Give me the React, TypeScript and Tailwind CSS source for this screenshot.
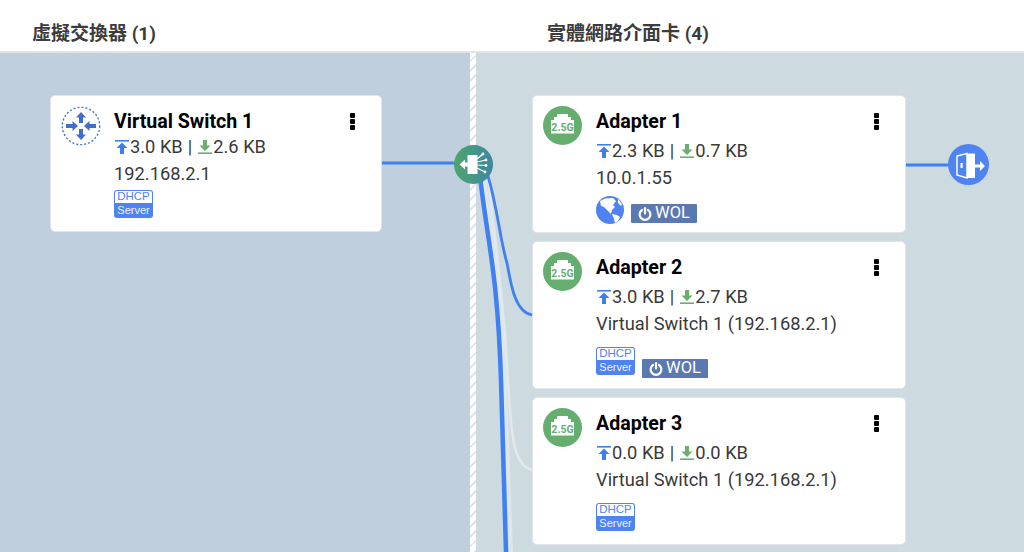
import React from "react";

const UpIcon = () => (
  <svg width="16" height="16" viewBox="0 0 16 16" className="shrink-0">
    <rect x="1" y="1" width="14" height="1.6" fill="#3f7fe8" />
    <path d="M8 3.5 L13.5 9 H10 V15 H6 V9 H2.5 Z" fill="#3f7fe8" />
  </svg>
);

const DownIcon = () => (
  <svg width="16" height="16" viewBox="0 0 16 16" className="shrink-0">
    <path d="M6 1 H10 V6.6 H13.5 L8 12 L2.5 6.6 H6 Z" fill="#6cae6f" />
    <rect x="1" y="13.4" width="14" height="1.6" fill="#6cae6f" />
  </svg>
);

const Stats = ({ up, down, mt }: { up: string; down: string; mt: string }) => (
  <div className={`${mt} flex items-center h-[27px] text-[18.3px] text-[#3a3a3a]`}>
    <UpIcon />
    <span>{up}</span>
    <span className="mx-[5px]">|</span>
    <DownIcon />
    <span>{down}</span>
  </div>
);

const Dots = () => (
  <div className="flex flex-col gap-[1px] mt-[7px]">
    <div className="w-[5px] h-[5px] bg-black rounded-[1px]"></div>
    <div className="w-[5px] h-[5px] bg-black rounded-[1px]"></div>
    <div className="w-[5px] h-[5px] bg-black rounded-[1px]"></div>
  </div>
);

const Dhcp = () => (
  <div className="w-[39px] h-[28px] rounded-[3px] bg-[#4f83f1] p-[1px] flex flex-col items-center leading-none shrink-0 font-['Liberation_Sans',sans-serif]">
    <div className="w-full h-[12px] bg-white rounded-t-[2px] text-[#4f83f1] text-[11.5px] flex items-center justify-center">DHCP</div>
    <div className="h-[14px] text-[#eef3ff] text-[11px] flex items-center justify-center">Server</div>
  </div>
);

const Wol = () => (
  <div className="w-[66px] h-[19px] bg-[#5a79b0] rounded-[1px] flex items-center justify-center gap-[3px] text-white text-[16.5px] leading-none">
    <svg width="14" height="14" viewBox="0 0 14 14" fill="none" stroke="white" strokeWidth="2.2" strokeLinecap="round">
      <path d="M4 3 A5.4 5.4 0 1 0 10 3" />
      <path d="M7 1.2 V6.5" />
    </svg>
    <span>WOL</span>
  </div>
);

const Globe = () => (
  <svg width="28" height="28" viewBox="0 0 28 28" className="shrink-0">
    <circle cx="14" cy="14" r="14" fill="#4f83f1" />
    <path d="M4 5 L9 2.5 L17 2 L20 5 L17 9 L19 11 L16 14 L15 18 L11 14 L8 11 L5 10 Z" fill="white" />
    <path d="M16 18 L21 19 L24 21 L22 25 L19 27 L18 23 Z" fill="white" />
    <path d="M22 3 L26 8 L25 10 L22 7 Z" fill="white" />
  </svg>
);

const SwitchIcon = () => (
  <svg width="40" height="40" viewBox="0 0 40 40" className="shrink-0">
    <circle cx="20" cy="20" r="18.7" fill="none" stroke="#3f70c9" strokeWidth="1.3" strokeDasharray="2 2" />
    <g fill="#3f70c9">
      <path d="M20 6 L25 11.5 H22 V17 H18 V11.5 H15 Z" />
      <path d="M20 34 L25 28.5 H22 V23 H18 V28.5 H15 Z" />
      <path d="M17 20 L11.5 15 V18 H5 V22 H11.5 V25 Z" />
      <path d="M23 20 L28.5 15 V18 H35 V22 H28.5 V25 Z" />
    </g>
  </svg>
);

const AdapterIcon = () => (
  <svg width="39" height="39" viewBox="0 0 39 39" className="shrink-0">
    <circle cx="19.5" cy="19.5" r="19.5" fill="#66ae70" />
    <path d="M14 8 H25 V11 H28 V14 H31 V27.5 H8 V14 H11 V11 H14 Z" fill="white" />
    <text x="19.5" y="25" textAnchor="middle" fontFamily="Roboto, sans-serif" fontWeight="700" fontSize="10.5" fill="#66ae70">2.5G</text>
  </svg>
);

const Card = ({
  title,
  up,
  down,
  ip,
  h,
  adapter,
  children,
}: {
  title: string;
  up: string;
  down: string;
  ip: string;
  h: string;
  adapter?: boolean;
  children: React.ReactNode;
}) => (
  <div className={`${h} bg-white rounded-[5px] border border-[#dfe5ea] flex pl-[10px] pr-[26px] pt-[10px]`}>
    <div className="w-[53px] shrink-0">{adapter ? <AdapterIcon /> : <SwitchIcon />}</div>
    <div className="flex-1 min-w-0">
      <div className="flex justify-between items-start h-[29px]">
        <div className="mt-[2px] text-[19.6px] font-bold text-black leading-[27px] h-[27px]">{title}</div>
        <Dots />
      </div>
      <Stats up={up} down={down} mt={adapter ? "mt-[2px]" : "mt-[-2px]"} />
      <div className="text-[18.3px] text-[#3a3a3a] leading-[27px] h-[27px]">{ip}</div>
      {children}
    </div>
  </div>
);

export default function App() {
  return (
    <div className="relative w-[1024px] h-[552px] overflow-hidden bg-white font-['Roboto','Noto_Sans_CJK_TC',sans-serif]">
      <div className="flex h-[53px] border-b-2 border-[#e3e3e3] text-[19px] font-bold text-[#3c3c3c]">
        <div className="w-[547px] pl-[32px] pt-[21px] leading-[26px]">虛擬交換器 (1)</div>
        <div className="pt-[21px] leading-[26px]">實體網路介面卡 (4)</div>
      </div>
      <div className="flex h-[499px]">
        <div className="w-[470px] bg-[#bfcfdd] pl-[50px] pt-[42px]">
          <div className="w-[332px]">
            <Card title="Virtual Switch 1" up="3.0 KB" down="2.6 KB" ip="192.168.2.1" h="h-[137px]">
              <div className="mt-[3px]">
                <Dhcp />
              </div>
            </Card>
          </div>
        </div>
        <div className="w-[6px] bg-[repeating-linear-gradient(135deg,#ffffff_0px,#ffffff_5px,#e2e5e8_5px,#e2e5e8_7px)]"></div>
        <div className="flex-1 bg-[#cddae0] pl-[56px] pt-[42px]">
          <div className="w-[374px] flex flex-col gap-[8px]">
            <Card adapter title="Adapter 1" up="2.3 KB" down="0.7 KB" ip="10.0.1.55" h="h-[138px]">
              <div className="flex items-start gap-[7px] mt-[5px]">
                <Globe />
                <div className="mt-[8px]">
                  <Wol />
                </div>
              </div>
            </Card>
            <Card adapter title="Adapter 2" up="3.0 KB" down="2.7 KB" ip="Virtual Switch 1 (192.168.2.1)" h="h-[148px]">
              <div className="flex items-end gap-[7px] mt-[10px]">
                <Dhcp />
                <div className="mb-[-3px]">
                  <Wol />
                </div>
              </div>
            </Card>
            <Card adapter title="Adapter 3" up="0.0 KB" down="0.0 KB" ip="Virtual Switch 1 (192.168.2.1)" h="h-[148px]">
              <div className="mt-[10px]">
                <Dhcp />
              </div>
            </Card>
          </div>
        </div>
      </div>

      {/* wires and hub sit over the panels */}
      <svg width="1024" height="552" className="absolute left-0 top-0 pointer-events-none" fill="none">
        <path d="M382 163 H470" stroke="#3f80f2" strokeWidth="3" />
        <path d="M906 165 H960" stroke="#3f80f2" strokeWidth="3" />
        <path d="M484 178 C491 240 501 270 505 380 L511 552" stroke="#dfe6e8" strokeWidth="4" />
        <path d="M488 178 C495 240 504 300 508 380 C511 430 512 465 532 470" stroke="#e3e8ea" strokeWidth="2.5" />
        <path d="M488 176 C498 210 500 240 507 263 C511 285 515 312 532 315" stroke="#3f80f2" strokeWidth="2.8" />
        <path d="M480 176 C487 240 497.5 270 501 380 L506 552" stroke="#3f80f2" strokeWidth="4.5" />
      </svg>
      <div className="absolute left-[454px] top-[145px] w-[39px] h-[39px] rounded-full bg-gradient-to-r from-[#4fa56a] to-[#3f86a0] flex items-center justify-center">
        <svg width="30" height="26" viewBox="0 0 30 26">
          <path d="M0.5 12.5 L6 7.5 V10.5 H8.5 V3 H18.5 V22 H8.5 V14.5 H6 V17.5 Z" fill="white" />
          <g stroke="white" strokeWidth="1.2">
            <path d="M18 7 L24 2" />
            <path d="M18 10 L27 8" />
            <path d="M18 13 L27 13.5" />
            <path d="M18 16 L26 20" />
          </g>
          <g fill="white">
            <circle cx="24" cy="2" r="1.4" />
            <circle cx="27" cy="8" r="1.4" />
            <circle cx="27" cy="13.5" r="1.4" />
            <circle cx="26" cy="20" r="1.4" />
          </g>
        </svg>
      </div>
      <div className="absolute left-[948px] top-[144px] w-[41px] h-[41px] rounded-full bg-[#4f83f1] flex items-center justify-center">
        <svg width="41" height="41" viewBox="0 0 41 41">
          <path d="M9 12 L19 9.5 V34 L9 31 Z" fill="none" stroke="white" strokeWidth="1.5" />
          <rect x="12.5" y="19" width="2.2" height="5" fill="white" />
          <path d="M19 9.5 H27 V34 H19 Z" fill="white" />
          <path d="M27 20.5 H32 V17 L37 22 L32 27 V23.5 H27 Z" fill="white" />
        </svg>
      </div>
    </div>
  );
}
